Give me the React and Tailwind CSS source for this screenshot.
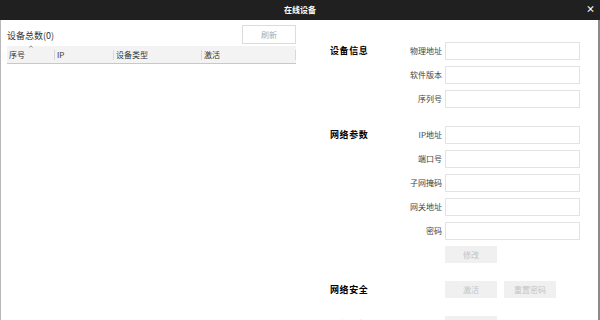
import React from 'react';

const font = { fontFamily: '"Noto Sans CJK SC", "Noto Sans", sans-serif' };

function Field({ title, label }) {
  return (
    <div className="flex items-center h-[18px]">
      <div className="w-[72px] text-[9px] font-bold text-black tracking-[0.6px]">{title}</div>
      <div className="w-[40px] text-right text-[8px] text-[#444]">{label}</div>
      <div className="ml-[3px] w-[135px] h-[18px] border border-[#e3e3e3] bg-white" />
    </div>
  );
}

function Btn({ children }) {
  return (
    <div className="w-[52px] h-[17px] bg-[#f0f0f0] text-[8px] text-[#c4c4c4] flex items-center justify-center">{children}</div>
  );
}

function BtnRow({ title, children }) {
  return (
    <div className="flex items-center h-[17px]">
      <div className="w-[115px] text-[9px] font-bold text-black tracking-[0.6px]">{title}</div>
      <div className="flex gap-[7px]">{children}</div>
    </div>
  );
}

export default function App() {
  return (
    <div className="w-[600px] h-[320px] overflow-hidden bg-white flex flex-col" style={font}>
      <div className="h-[20px] bg-[#202020] flex items-center justify-center relative shrink-0">
        <span className="text-[8px] font-bold text-white">在线设备</span>
        <span className="absolute right-[5px] top-[4px] text-[9px] font-bold text-white leading-none">×</span>
      </div>
      <div className="flex flex-1 border-l border-[#b8b8b8] border-r-2 border-r-[#8a8a8a]">
        <div className="w-[329px] pl-[6px] pt-[5px]">
          <div className="flex items-center justify-between w-[289px]">
            <span className="text-[9px] text-[#333] mt-[2px]">设备总数(0)</span>
            <div className="w-[54px] h-[19px] border border-[#dcdcdc] flex items-center justify-center text-[8px] text-[#aaa]">刷新</div>
          </div>
          <div className="mt-[2px] w-[289px] h-[18px] bg-[#f3f3f3] border-b border-[#c8c8c8] flex items-center text-[8px] text-[#333]">
            <div className="w-[47px] pl-[2px] relative">
              序号
              <svg className="absolute left-[22px] top-[-4px]" width="4" height="3" viewBox="0 0 4 3">
                <path d="M0.5 2.5 L2 0.8 L3.5 2.5" fill="none" stroke="#777" strokeWidth="0.8" />
              </svg>
            </div>
            <div className="w-[59px] border-l border-[#d8d8d8] pl-[2px] leading-[10px]">IP</div>
            <div className="w-[88px] border-l border-[#d8d8d8] pl-[2px] leading-[10px]">设备类型</div>
            <div className="flex-1 border-l border-[#d8d8d8] pl-[2px] leading-[10px]">激活</div>
            <div className="h-[10px] border-l border-[#d8d8d8]" />
          </div>
        </div>
        <div className="pt-[22px] flex flex-col">
          <div className="flex flex-col gap-[6px]">
            <Field title="设备信息" label="物理地址" />
            <Field label="软件版本" />
            <Field label="序列号" />
          </div>
          <div className="flex flex-col gap-[6px] mt-[18px]">
            <Field title="网络参数" label="IP地址" />
            <Field label="端口号" />
            <Field label="子网掩码" />
            <Field label="网关地址" />
            <Field label="密码" />
            <BtnRow><Btn>修改</Btn></BtnRow>
          </div>
          <div className="flex flex-col gap-[18px] mt-[18px]">
            <BtnRow title="网络安全"><Btn>激活</Btn><Btn>重置密码</Btn></BtnRow>
            <BtnRow title="远程升级"><Btn>升级</Btn></BtnRow>
          </div>
        </div>
      </div>
    </div>
  );
}
